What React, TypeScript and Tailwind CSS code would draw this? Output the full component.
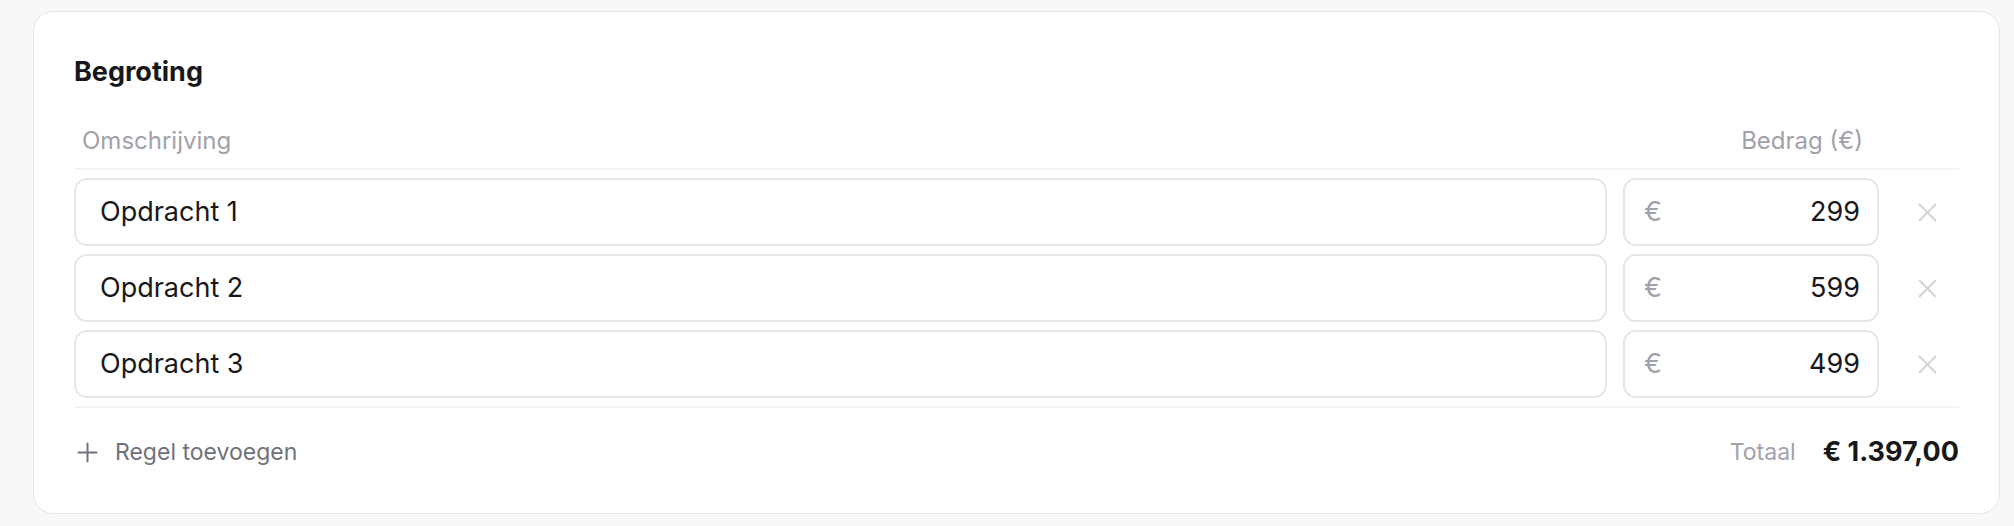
import React from "react";

type Line = { id: number; label: string; amount: number };

const lines: Line[] = [
  { id: 1, label: "Opdracht 1", amount: 299 },
  { id: 2, label: "Opdracht 2", amount: 599 },
  { id: 3, label: "Opdracht 3", amount: 499 },
];

const formatTotal = (n: number) =>
  n.toLocaleString("nl-NL", { minimumFractionDigits: 2, maximumFractionDigits: 2 });

const CloseIcon = () => (
  <svg width="19" height="19" viewBox="0 0 19 19" fill="none" stroke="#d4d4d8" strokeWidth="2" strokeLinecap="round">
    <path d="M1.5 1.5L17.5 17.5M17.5 1.5L1.5 17.5" />
  </svg>
);

const PlusIcon = () => (
  <svg width="21" height="21" viewBox="0 0 21 21" fill="none" stroke="#71717a" strokeWidth="2" strokeLinecap="round">
    <path d="M10.5 1.5V19.5M1.5 10.5H19.5" />
  </svg>
);

export default function App() {
  const total = lines.reduce((sum, l) => sum + l.amount, 0);

  return (
    <div className="min-h-[526px] w-full bg-[#f8f8f8] pl-[33px] pt-[11px] font-['Inter',sans-serif]">
      <div className="w-[1967px] h-[503px] rounded-[20px] border border-[#e4e4e4] bg-white px-[40px] pt-[45px]">
        <h2 className="text-[27px] leading-[30px] font-bold text-[#18181b]">Begroting</h2>

        {/* column headers */}
        <div className="mt-[26px] h-[57px] grid grid-cols-[1fr_256px_64px] gap-x-[16px] items-center border-b-2 border-[#f3f3f4] text-[24px] text-[#a1a1aa]">
          <span className="pl-[8px]">Omschrijving</span>
          <span className="text-right pr-[16px]">Bedrag (€)</span>
          <span />
        </div>

        <div className="flex flex-col gap-[8px] py-[8px] border-b-2 border-[#f3f3f4]">
          {lines.map((line) => (
            <div key={line.id} className="grid grid-cols-[1fr_256px_64px] gap-x-[16px] items-center">
              <div className="h-[68px] flex items-center rounded-[13px] border-2 border-[#e6e6e8] pl-[24px] text-[27px] text-[#18181b]">
                {line.label}
              </div>
              <div className="h-[68px] flex items-center justify-between rounded-[13px] border-2 border-[#e6e6e8] pl-[19px] pr-[17px] text-[27px]">
                <span className="text-[#a1a1aa]">€</span>
                <span className="text-[#18181b]">{line.amount}</span>
              </div>
              <div className="flex justify-center">
                <CloseIcon />
              </div>
            </div>
          ))}
        </div>

        <div className="mt-[24px] h-[40px] flex items-center justify-between">
          <button className="flex items-center gap-[17px] pl-[3px] text-[23px] text-[#71717a]">
            <PlusIcon />
            Regel toevoegen
          </button>
          <div className="flex items-center gap-[27px]">
            <span className="text-[23px] text-[#a1a1aa]">Totaal</span>
            <span className="text-[27px] font-bold text-[#18181b]">€ {formatTotal(total)}</span>
          </div>
        </div>
      </div>
    </div>
  );
}
